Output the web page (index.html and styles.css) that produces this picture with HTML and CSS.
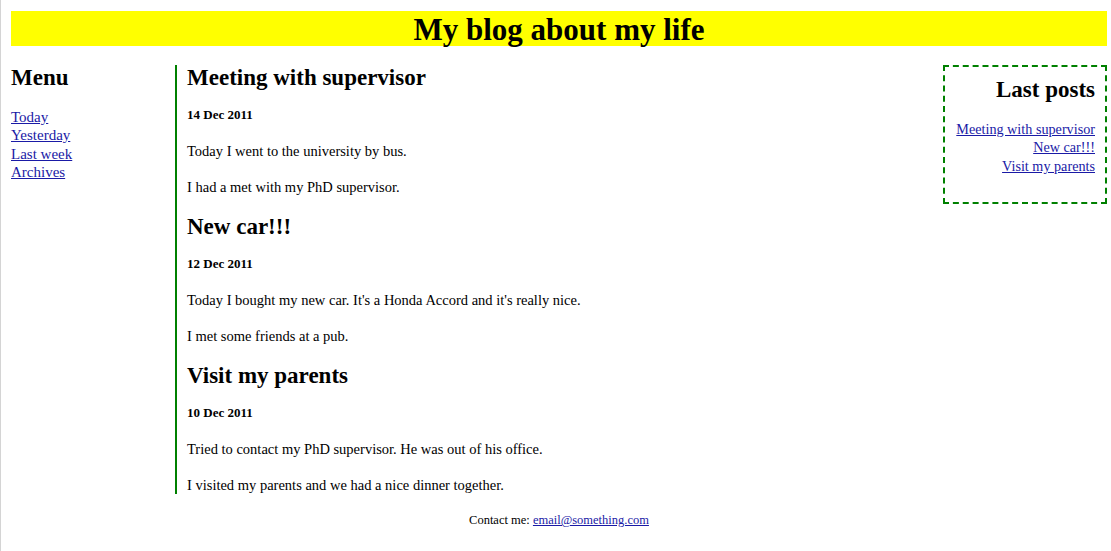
FILE: index.html
```html
<!DOCTYPE html>
<html>
<head>
<meta charset="utf-8">
<title>My blog about my life</title>
<link rel="stylesheet" href="styles.css">
</head>
<body>
<div class="page">
  <header class="header"><h1>My blog about my life</h1></header>
  <div class="columns">
    <nav class="menu">
      <h2>Menu</h2>
      <ul>
        <li><a href="#">Today</a></li>
        <li><a href="#">Yesterday</a></li>
        <li><a href="#">Last week</a></li>
        <li><a href="#">Archives</a></li>
      </ul>
    </nav>
    <main class="main">
      <article class="post">
        <h2>Meeting with supervisor</h2>
        <h5>14 Dec 2011</h5>
        <p>Today I went to the university by bus.</p>
        <p>I had a met with my PhD supervisor.</p>
      </article>
      <article class="post">
        <h2>New car!!!</h2>
        <h5>12 Dec 2011</h5>
        <p>Today I bought my new car. It's a Honda Accord and it's really nice.</p>
        <p>I met some friends at a pub.</p>
      </article>
      <article class="post">
        <h2>Visit my parents</h2>
        <h5>10 Dec 2011</h5>
        <p>Tried to contact my PhD supervisor. He was out of his office.</p>
        <p>I visited my parents and we had a nice dinner together.</p>
      </article>
    </main>
    <aside class="sidebar">
      <h2>Last posts</h2>
      <ul>
        <li><a href="#">Meeting with supervisor</a></li>
        <li><a href="#">New car!!!</a></li>
        <li><a href="#">Visit my parents</a></li>
      </ul>
    </aside>
  </div>
  <footer class="footer">Contact me: <a href="#">email@something.com</a></footer>
</div>
</body>
</html>
```

FILE: styles.css
```css
html, body {
  margin: 0;
  padding: 0;
  background: #fff;
}
body {
  font-family: "Liberation Serif", "Times New Roman", serif;
  color: #000;
}
.page {
  border-left: 1px solid #d4d4d4;
  padding: 11px 4px 0 10px;
  min-height: 540px;
}
a {
  color: #1a1aa6;
}
.header {
  background: #ffff00;
  height: 35px;
}
.header h1 {
  margin: 0;
  font-size: 31px;
  line-height: 37px;
  text-align: center;
  font-weight: bold;
}
.columns {
  display: flex;
  align-items: flex-start;
  margin-top: 19px;
}
.menu {
  width: 164px;
  flex: none;
}
.menu h2, .main h2, .sidebar h2 {
  margin: 0;
  font-size: 23px;
  line-height: 26px;
}
.menu ul, .sidebar ul {
  list-style: none;
  margin: 17px 0 0;
  padding: 0;
}
.menu li {
  font-size: 15px;
  line-height: 18.3px;
  white-space: nowrap;
}
.sidebar li {
  font-size: 14.2px;
  line-height: 18.4px;
  white-space: nowrap;
}
.main {
  flex: 1;
  border-left: 2px solid #008000;
  padding-left: 10px;
}
.main h2 {
  margin-bottom: 16px;
}
.main h5 {
  margin: 0 0 20px;
  font-size: 13px;
  line-height: 15px;
}
.main p {
  margin: 0 0 18px;
  font-size: 14.5px;
  line-height: 18px;
}
.post:last-child p:last-child {
  margin-bottom: 0;
}
.sidebar {
  width: 164px;
  flex: none;
  box-sizing: border-box;
  height: 139px;
  border: 2px dashed #008000;
  padding: 10px 10px 0;
  text-align: right;
}
.sidebar ul {
  margin-top: 17px;
}
.footer {
  margin-top: 19px;
  text-align: center;
  font-size: 12.5px;
  line-height: 14px;
}
```
